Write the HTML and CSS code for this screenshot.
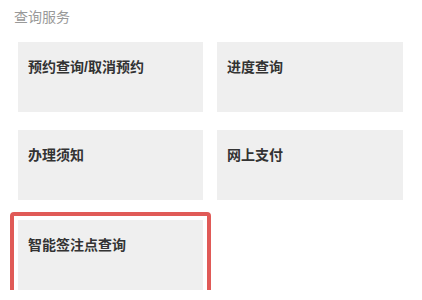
FILE: index.html
```html
<!DOCTYPE html>
<html lang="zh-CN">
<head>
  <meta charset="UTF-8">
  <title>查询服务</title>
  <link rel="stylesheet" href="styles.css">
</head>
<body>
  <div class="section">
    <div class="section-title">查询服务</div>
    <div class="service-grid">
      <div class="service-card">预约查询/取消预约</div>
      <div class="service-card">进度查询</div>
      <div class="service-card">办理须知</div>
      <div class="service-card">网上支付</div>
      <div class="service-card active">智能签注点查询</div>
    </div>
  </div>
</body>
</html>
```

FILE: styles.css
```css
body {
  margin: 0;
  background: #ffffff;
  font-family: "Liberation Sans", "Noto Sans CJK SC", sans-serif;
}
.section {
  padding: 7px 19px 0 18px;
}
.section-title {
  margin-left: -4px;
  font-size: 14px;
  line-height: 20px;
  color: #999999;
}
.service-grid {
  display: grid;
  grid-template-columns: 185px 186px;
  column-gap: 14px;
  row-gap: 18px;
  margin-top: 15px;
}
.service-card {
  position: relative;
  height: 70px;
  box-sizing: border-box;
  padding: 15px 10px 0 10px;
  background: #efefef;
  font-size: 14px;
  line-height: 20px;
  font-weight: bold;
  color: #333333;
}
.service-card.active {
  margin-top: 2px;
}
.service-card.active::after {
  content: "";
  position: absolute;
  top: -8px;
  left: -8px;
  right: -8px;
  bottom: -8px;
  border: 4px solid #e05a57;
  border-radius: 4px;
}
```
